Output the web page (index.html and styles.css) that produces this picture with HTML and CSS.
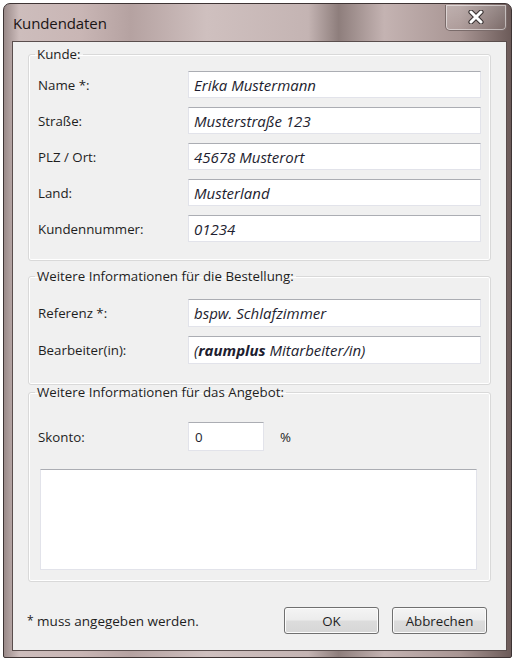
FILE: index.html
```html
<!DOCTYPE html>
<html lang="de">
<head>
<meta charset="utf-8">
<title>Kundendaten</title>
<link rel="stylesheet" href="styles.css">
</head>
<body>
<div class="window">
  <div class="titlebar">
    <span class="title">Kundendaten</span>
    <div class="close">
      <svg class="x" width="18" height="14" viewBox="0 0 18 14">
        <path d="M4 2 L14 12 M14 2 L4 12" stroke="#3b3434" stroke-width="5.2" stroke-linecap="round" fill="none"/>
        <path d="M4 2 L14 12 M14 2 L4 12" stroke="#ffffff" stroke-width="3" stroke-linecap="round" fill="none"/>
      </svg>
    </div>
  </div>
  <div class="client">
    <fieldset class="group g1">
      <legend>Kunde:</legend>
      <div class="rows">
        <label>Name *:</label><div class="field">Erika Mustermann</div>
        <label>Straße:</label><div class="field">Musterstraße 123</div>
        <label>PLZ / Ort:</label><div class="field">45678 Musterort</div>
        <label>Land:</label><div class="field">Musterland</div>
        <label>Kundennummer:</label><div class="field">01234</div>
      </div>
    </fieldset>
    <fieldset class="group g2">
      <legend>Weitere Informationen für die Bestellung:</legend>
      <div class="rows">
        <label>Referenz *:</label><div class="field">bspw. Schlafzimmer</div>
        <label>Bearbeiter(in):</label><div class="field">(<b>raumplus</b> Mitarbeiter/in)</div>
      </div>
    </fieldset>
    <fieldset class="group g3">
      <legend>Weitere Informationen für das Angebot:</legend>
      <div class="skonto">
        <label>Skonto:</label><div class="field small">0</div><span class="pct">%</span>
      </div>
      <div class="memo"></div>
    </fieldset>
    <div class="footer">
      <span class="note"><span class="star">*</span> muss angegeben werden.</span>
      <div class="buttons">
        <div class="btn">OK</div>
        <div class="btn">Abbrechen</div>
      </div>
    </div>
  </div>
</div>
</body>
</html>
```
FILE: styles.css
```css
html, body {
  margin: 0;
  padding: 0;
  background: #ffffff;
}
body {
  font-family: "Open Sans", "Noto Sans", sans-serif;
  font-size: 13px;
  color: #1e1e1e;
}
.window {
  box-sizing: border-box;
  margin: 3px 0 0 3px;
  width: 509px;
  height: 655px;
  border: 1px solid #3e3434;
  border-radius: 7px 7px 2px 2px;
  background: linear-gradient(90deg, #9a8a89 0%, #cdbdbc 3%, #c9b6b5 15%, #b5a2a1 25%, #cfc0bf 40%, #c4b4b3 60%, #8e7e7c 66%, #c4b3b2 75%, #a89593 90%, #6c5b59 100%);
  padding: 0 4px 6px 8px;
  display: flex;
  flex-direction: column;
}
.titlebar {
  height: 37px;
  flex: none;
  display: flex;
  align-items: flex-start;
  justify-content: space-between;
}
.title {
  margin: 9px 0 0 1px;
  font-size: 15px;
  color: #1a1414;
  letter-spacing: -0.1px;
}
.close {
  box-sizing: border-box;
  width: 62px;
  height: 26px;
  margin: 1px 0 0 0;
  border: 1px solid #7a6b6a;
  border-top: none;
  border-radius: 0 0 5px 5px;
  background: linear-gradient(180deg, rgba(255,255,255,0.22), rgba(255,255,255,0.06));
  box-shadow: inset 0 0 0 1px rgba(255,255,255,0.5);
  display: flex;
  align-items: center;
  justify-content: center;
}
.x {
  display: block;
  margin-top: -1px;
}
.client {
  flex: 1;
  box-sizing: border-box;
  background: #f0f0f0;
  border: 1px solid #5a4e4d;
  padding: 0 15px 0 15px;
  display: flex;
  flex-direction: column;
}
.group {
  margin: 0;
  border: 1px solid #d9d9d9;
  border-radius: 3px;
  box-shadow: inset 0 0 0 1px #ffffff;
  padding: 0 9px 15px 9px;
  min-width: 0;
}
.group legend {
  padding: 0 2px;
  margin-left: -3px;
  line-height: 16px;
  font-size: 13.3px;
  color: #1e1e1e;
}
.g1 { margin-top: 4px; padding-top: 9px; padding-bottom: 18px; }
.g2 { margin-top: 7px; padding-top: 15px; padding-bottom: 20px; }
.g2 .field { height: 28px; }
.g3 { margin-top: -1px; padding-top: 22px; padding-bottom: 11px; }
.rows {
  display: grid;
  grid-template-columns: 150px 1fr;
  row-gap: 9px;
  align-items: center;
}
.rows label, .skonto label {
  color: #1e1e1e;
  font-size: 13.3px;
}
.field {
  box-sizing: border-box;
  height: 27px;
  background: #ffffff;
  border: 1px solid #e2e3ea;
  border-top-color: #abadb3;
  padding: 0 5px;
  display: flex;
  align-items: center;
  font-style: italic;
  font-size: 15px;
  color: #1e1e30;
  white-space: nowrap;
}
.field b {
  font-weight: bold;
  margin-right: 0.25em;
}
.skonto {
  display: grid;
  grid-template-columns: 150px 76px auto;
  align-items: center;
}
.field.small {
  height: 29px;
  font-style: normal;
  font-size: 13.3px;
  padding-left: 6px;
}
.pct {
  margin-left: 16px;
  font-size: 13.3px;
}
.memo {
  box-sizing: border-box;
  height: 101px;
  margin: 18px 4px 0 2px;
  background: #ffffff;
  border: 1px solid #e2e3ea;
  border-top-color: #abadb3;
}
.footer {
  flex: 1;
  display: flex;
  align-items: center;
  justify-content: space-between;
  padding: 9px 4px 0 0;
}
.note {
  margin-left: -1px;
  font-size: 13.5px;
}
.star {
  font-size: 12px;
  vertical-align: 1px;
}
.buttons {
  display: flex;
  gap: 13px;
}
.btn {
  box-sizing: border-box;
  width: 95px;
  height: 27px;
  border: 1px solid #707070;
  border-radius: 3px;
  background: linear-gradient(180deg, #f4f4f4 0%, #ececec 48%, #dcdcdc 52%, #d6d6d6 100%);
  box-shadow: inset 0 0 0 1px #fcfcfc;
  display: flex;
  align-items: center;
  justify-content: center;
  color: #1e1e1e;
  font-size: 13.3px;
}
```
